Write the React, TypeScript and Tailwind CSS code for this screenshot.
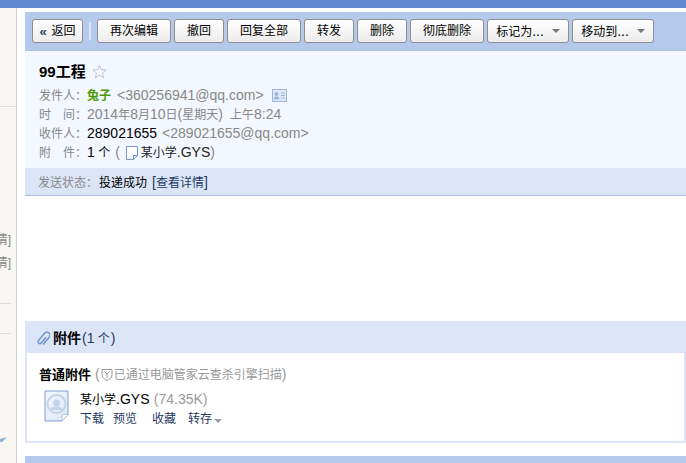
const sans = "font-['Liberation_Sans','Noto_Sans_CJK_SC',sans-serif]";

// latin text runs wider than the 12px CJK in the original, so it gets its own size
function L({ children, className = "" }: { children: React.ReactNode; className?: string }) {
  return <span className={`text-[14px] ${className}`}>{children}</span>;
}

function ToolButton({ label, className, menu }: { label: string; className: string; menu?: boolean }) {
  return (
    <button className={`flex h-6 shrink-0 items-center justify-center gap-[8px] rounded-[3px] border border-[#8f8f8f] bg-gradient-to-b from-white to-[#ececec] text-[12px] text-black ${className}`}>
      <span>
        {label}
        {menu && <L>...</L>}
      </span>
      {menu && <span className="h-0 w-0 border-x-[4px] border-t-[4px] border-x-transparent border-t-[#777]" />}
    </button>
  );
}

function FileIcon() {
  return (
    <svg width="26" height="32" viewBox="0 0 26 32" className="shrink-0">
      <defs>
        <linearGradient id="file" x1="0" y1="0" x2="1" y2="1">
          <stop offset="0" stopColor="#f3f7fd" />
          <stop offset="1" stopColor="#dbe7f8" />
        </linearGradient>
      </defs>
      <path d="M1 1H24V25L18 31H1Z" fill="url(#file)" stroke="#7f9fcf" />
      <path d="M24 25C22 24 20 24 18 25V31Z" fill="#fff" stroke="#a9bedd" />
      <circle cx="12.500" cy="14" r="9" fill="none" stroke="#c5d3e6" strokeWidth="2" />
      <circle cx="12.500" cy="13" r="3.500" fill="#c5d3e6" />
      <path d="M6 20C8 15 17 15 19 20" fill="#c5d3e6" />
    </svg>
  );
}

export default function App() {
  return (
    <div className={`flex h-[463px] w-[686px] flex-col overflow-hidden bg-white ${sans}`}>
      <div className="h-2 shrink-0 bg-[#5f87d2]" />
      <div className="flex min-h-0 flex-1">
        {/* left sidebar, cut off by the window */}
        <aside className="flex w-[17px] shrink-0 flex-col overflow-hidden border-r border-[#cfcfcf] bg-[#f8f7f3] pt-[98px] text-[12px] text-[#888]">
          <div className="h-px w-full bg-[#dedede]" />
          <div className="mt-[126px] flex h-[23px] justify-end whitespace-nowrap pr-[5px] leading-[14px]">情]</div>
          <div className="flex h-[23px] justify-end whitespace-nowrap pr-[5px] leading-[14px]">情]</div>
          <div className="mt-[24px] h-px w-[11px] bg-[#dcdcdc]" />
          <div className="mt-[29px] h-px w-[11px] bg-[#dcdcdc]" />
          <svg width="8" height="5" viewBox="0 0 8 5" className="mt-[103px]">
            <path d="M0 2L7 0L2 5H0Z" fill="#8fb0cf" />
          </svg>
        </aside>

        <main className="ml-2 flex min-w-0 flex-1 flex-col pt-1">
          {/* toolbar */}
          <div className="flex h-[39px] shrink-0 items-start gap-[3px] border-b border-[#a9c0e4] bg-[#b4c9eb] pl-[7px] pt-[7px]">
            <button className="flex h-6 w-[51px] shrink-0 items-center justify-center gap-[5px] rounded-[3px] border border-[#8f8f8f] bg-gradient-to-b from-white to-[#ececec] text-[12px] text-black">
              <span className="text-[13px] font-bold leading-none text-[#2a3f6b]">«</span>返回
            </button>
            <div className="mx-[3px] h-[18px] w-[2px] translate-y-[3px] bg-[#dfe7f5]" />
            <ToolButton label="再次编辑" className="w-[74px]" />
            <ToolButton label="撤回" className="w-[50px]" />
            <ToolButton label="回复全部" className="w-[74px]" />
            <ToolButton label="转发" className="w-[50px]" />
            <ToolButton label="删除" className="w-[50px]" />
            <ToolButton label="彻底删除" className="w-[74px]" />
            <ToolButton label="标记为" className="w-[82px]" menu />
            <ToolButton label="移动到" className="w-[82px]" menu />
          </div>

          {/* mail header */}
          <section className="h-[117px] shrink-0 bg-[#f3f7ff] pl-[14px] pt-[8px] text-[12px] leading-[19px] text-[#888]">
            <div className="flex h-[24px] items-center gap-[6px] text-[15px] font-bold text-black">
              99工程
              <svg width="15" height="15" viewBox="0 0 24 24" fill="none" stroke="#b9c4d6" strokeWidth="1.6">
                <path d="M12 2l3 7 7.500 .6-5.700 4.900 1.800 7.500L12 18l-6.600 4 1.800-7.500L1.500 9.600 9 9z" />
              </svg>
            </div>
            <div className="mt-[3px] h-[19px] whitespace-nowrap">
              发件人：<span className="font-bold text-[#4d9a00]">兔子</span>
              <L className="ml-[6px]">&lt;360256941@qq.com&gt;</L>
              <svg width="15" height="13" viewBox="0 0 15 13" className="ml-[8px] inline-block align-[-2px]">
                <rect x=".5" y=".5" width="14" height="12" fill="#dfe9f8" stroke="#9db6da" />
                <circle cx="4.500" cy="5" r="2" fill="#9db6da" />
                <path d="M2 10c.5-3 4.500-3 5 0zM9 4h4M9 6.500h4M9 9h4" fill="#9db6da" stroke="#9db6da" />
              </svg>
            </div>
            <div className="h-[19px] whitespace-nowrap">
              <span className="inline-block w-[48px]">时　间：</span>
              <L>2014</L>年<L>8</L>月<L>10</L>日<L>(</L>星期天<L>)</L><span className="ml-[7px]">上午</span><L>8:24</L>
            </div>
            <div className="h-[19px] whitespace-nowrap">
              收件人：<L className="text-black">289021655</L>
              <L className="ml-[5px]">&lt;289021655@qq.com&gt;</L>
            </div>
            <div className="h-[19px] whitespace-nowrap">
              <span className="inline-block w-[48px]">附　件：</span>
              <span className="text-black"><L>1</L> 个</span>
              <L className="ml-[5px]">(</L>
              <svg width="12" height="14" viewBox="0 0 12 14" className="ml-[6px] mr-[3px] inline-block align-[-3px]">
                <path d="M.5.500H11.500V9.500L7.500 13.500H.5Z" fill="#fff" stroke="#6f97cc" />
                <path d="M11.500 9.500H7.500V13.500" fill="none" stroke="#6f97cc" />
              </svg>
              <span className="text-[#222]">某小学<L>.GYS</L></span><L>)</L>
            </div>
          </section>

          {/* send status */}
          <div className="h-[28px] shrink-0 whitespace-nowrap border-b border-[#a9bcd9] bg-[#dce5f7] pl-[13px] text-[12px] leading-[28px] text-[#888]">
            发送状态：<span className="ml-[1px] text-black">投递成功</span>
            <L className="ml-[5px] text-[#1f3a63]">[</L>
            <span className="text-[#1f3a63]">查看详情</span>
            <L className="text-[#1f3a63]">]</L>
          </div>

          {/* empty mail body */}
          <div className="h-[125px] shrink-0" />

          {/* attachments */}
          <section className="h-[122px] shrink-0 border-2 border-t-0 border-[#dce5f7]">
            <div className="-mx-[2px] flex h-[32px] items-center bg-[#dce5f7] pl-[11px] pt-[2px] text-[12px]">
              <svg width="14" height="17" viewBox="0 0 14 16" fill="none" stroke="#6f97cc" strokeWidth="1.500" className="mr-[3px]">
                <path transform="rotate(40 7 8)" d="M8.500 5v7.500a1.800 1.800 0 0 1-3.600 0V3a3 3 0 0 1 6 0v9.500" />
              </svg>
              <span className="text-[14px] font-bold text-black">附件</span>
              <span className="ml-[1px] text-[#1f3a63]"><L>(1</L> 个<L className="ml-[1px]">)</L></span>
            </div>
            <div className="pl-[12px] pt-[12px]">
              <div className="h-[18px] whitespace-nowrap text-[12px] leading-[18px] text-[#999]">
                <span className="text-[13px] font-bold text-black">普通附件</span>
                <L className="ml-[4px]">(</L>
                <svg width="12" height="13" viewBox="0 0 12 13" fill="none" stroke="#999" className="mx-[1px] inline-block align-[-2px]">
                  <path d="M1 1.500H11V7C11 10 8 11.500 6 12.500 4 11.500 1 10 1 7Z" />
                  <path d="M3.500 3.500 6 6 8.500 3.500M6 6V10" />
                </svg>
                已通过电脑管家云查杀引擎扫描<L>)</L>
              </div>
              <div className="ml-[5px] mt-[7px] flex gap-[10px]">
                <FileIcon />
                <div className="text-[12px] leading-[19px]">
                  <div className="whitespace-nowrap text-black">
                    某小学<L>.GYS</L> <L className="ml-[1px] text-[#999]">(74.35K)</L>
                  </div>
                  <div className="flex items-center whitespace-nowrap text-[#1f3a63]">
                    <span>下载</span>
                    <span className="ml-[9px]">预览</span>
                    <span className="ml-[15px]">收藏</span>
                    <span className="ml-[12px]">转存</span>
                    <span className="ml-[2px] mt-[2px] h-0 w-0 border-x-[4px] border-t-[4px] border-x-transparent border-t-[#999]" />
                  </div>
                </div>
              </div>
            </div>
          </section>

          <div className="mt-[13px] h-[20px] shrink-0 bg-[#b4c9eb]" />
        </main>
      </div>
    </div>
  );
}
